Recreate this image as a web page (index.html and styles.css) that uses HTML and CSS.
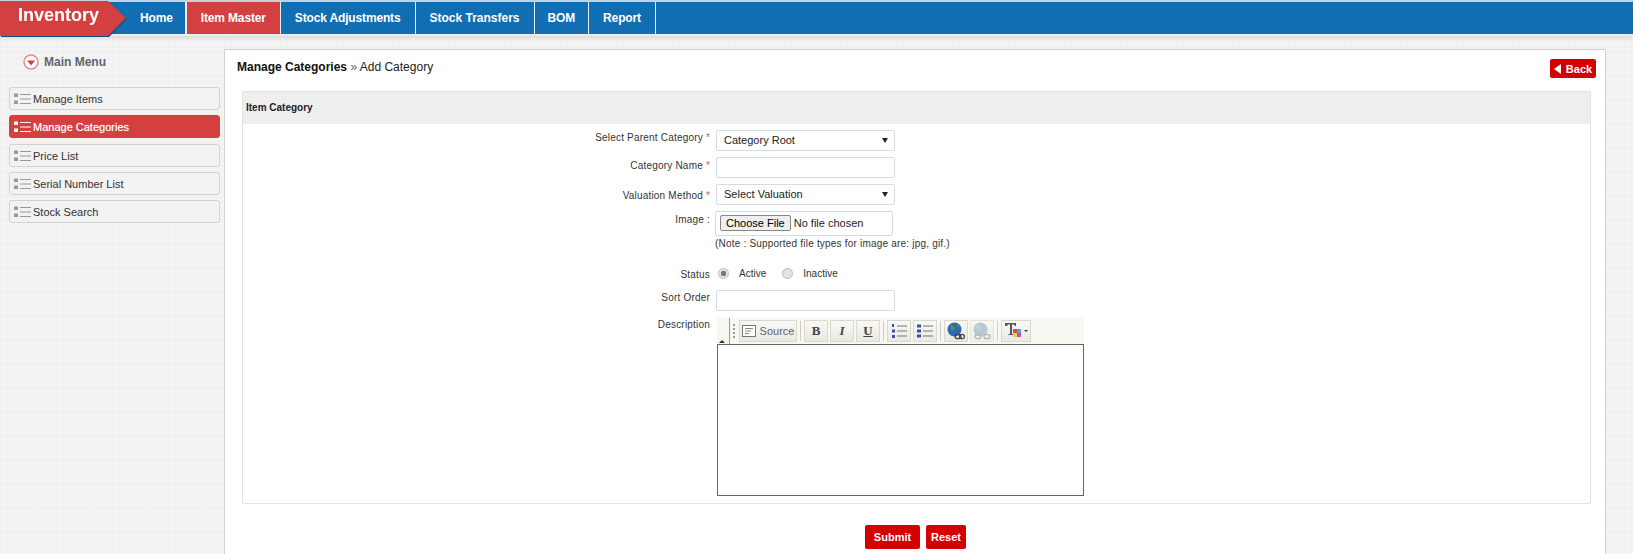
FILE: index.html
```html
<!DOCTYPE html>
<html lang="en">

<head>
    <meta charset="UTF-8">
    <meta name="viewport" content="width=device-width, initial-scale=1.0">
    <title>Add Category</title>
    <link rel="stylesheet" href="styles.css">
</head>

<body>
    <svg class="defs" width="0" height="0">
        <symbol id="list" viewBox="0 0 17 12">
            <rect class="dots" x="0" y="0.500" width="4" height="3.500" />
            <rect class="dots" x="0" y="7.500" width="4" height="3.500" />
            <rect x="6" y="1" width="11" height="1" />
            <rect x="6" y="5.500" width="11" height="1" />
            <rect x="6" y="10" width="11" height="1" />
        </symbol>
    </svg>

    <header class="topbar">
        <div class="logo-wrap">
            <div class="logo">Inventory</div>
        </div>
        <nav class="nav">
            <a class="nav-item">Home</a>
            <a class="nav-item active">Item Master</a>
            <a class="nav-item">Stock Adjustments</a>
            <a class="nav-item nav-transfers">Stock Transfers</a>
            <a class="nav-item nav-bom">BOM</a>
            <a class="nav-item">Report</a>
        </nav>
    </header>

    <div class="page">
        <aside class="sidebar">
            <div class="menu-title">
                <svg class="menu-icon" viewBox="0 0 16 16">
                    <circle cx="8" cy="8" r="7" fill="#fff" stroke="#e98a8a" stroke-width="1.500" />
                    <path d="M4 6.500h8L8 11.500z" fill="#d43f3f" />
                </svg>
                <span>Main Menu</span>
            </div>
            <a class="side-item"><svg class="list-icon"><use href="#list" /></svg>Manage Items</a>
            <a class="side-item active"><svg class="list-icon"><use href="#list" /></svg>Manage Categories</a>
            <a class="side-item"><svg class="list-icon"><use href="#list" /></svg>Price List</a>
            <a class="side-item"><svg class="list-icon"><use href="#list" /></svg>Serial Number List</a>
            <a class="side-item"><svg class="list-icon"><use href="#list" /></svg>Stock Search</a>
        </aside>

        <main class="panel">
            <div class="panel-head">
                <div class="crumbs"><b>Manage Categories</b> <span class="sep">»</span> Add Category</div>
                <a class="btn btn-back"><span class="back-arrow"></span>Back</a>
            </div>

            <section class="box">
                <h2 class="box-title">Item Category</h2>
                <form class="form">
                    <div class="row row-select">
                        <label class="label">Select Parent Category <i>*</i></label>
                        <div class="select-wrap">
                            <select class="field">
                                <option>Category Root</option>
                            </select>
                        </div>
                    </div>
                    <div class="row row-name">
                        <label class="label">Category Name <i>*</i></label>
                        <input class="field" type="text">
                    </div>
                    <div class="row row-valuation">
                        <label class="label">Valuation Method <i>*</i></label>
                        <div class="select-wrap">
                            <select class="field">
                                <option>Select Valuation</option>
                            </select>
                        </div>
                    </div>
                    <div class="row row-image">
                        <label class="label">Image :</label>
                        <div>
                            <input class="file" type="file">
                            <div class="note">(Note : Supported file types for image are: jpg, gif.)</div>
                        </div>
                    </div>
                    <div class="row row-status">
                        <label class="label">Status</label>
                        <div class="radios">
                            <label class="radio"><input type="radio" name="status" checked>Active</label>
                            <label class="radio"><input type="radio" name="status">Inactive</label>
                        </div>
                    </div>
                    <div class="row row-sort">
                        <label class="label">Sort Order</label>
                        <input class="field" type="text">
                    </div>
                    <div class="row row-desc">
                        <label class="label">Description</label>
                        <div class="editor">
                            <div class="toolbar">
                                <div class="collapse"><span></span></div>
                                <div class="grip"></div>
                                <a class="tool tool-source">
                                    <svg width="14" height="12" viewBox="0 0 14 12">
                                        <rect x="0.500" y="0.500" width="13" height="11" fill="#fff" stroke="#777" />
                                        <path d="M3 3.500h8M3 6h6M3 8.500h4" stroke="#888" />
                                    </svg>
                                    Source
                                </a>
                                <div class="tool-sep"></div>
                                <a class="tool fmt fmt-b">B</a>
                                <a class="tool fmt fmt-i">I</a>
                                <a class="tool fmt fmt-u">U</a>
                                <div class="tool-sep"></div>
                                <a class="tool">
                                    <svg width="16" height="16" viewBox="0 0 16 16">
                                        <path d="M1 1h2v3H1zM1 6.500h3v3H1zM1 12h3v3H1z" fill="#3a4fa8" />
                                        <path d="M6 3h10M6 8h10M6 13h10" stroke="#777" stroke-width="1.200" />
                                    </svg>
                                </a>
                                <a class="tool">
                                    <svg width="16" height="16" viewBox="0 0 16 16">
                                        <path d="M0 1.500h4v3H0zM0 6.500h4v3H0zM0 11.500h4v3H0z" fill="#3a4fa8" />
                                        <path d="M6 3h10M6 8h10M6 13h10" stroke="#777" stroke-width="1.200" />
                                    </svg>
                                </a>
                                <div class="tool-sep"></div>
                                <a class="tool">
                                    <svg width="18" height="18" viewBox="0 0 18 18">
                                        <circle cx="7.500" cy="7.500" r="7" fill="#2f68b5" />
                                        <path d="M3 3l4 1 1 3-3 2zM9 1l4 3-2 2z" fill="#4d9a45" />
                                        <ellipse cx="11" cy="14.500" rx="3" ry="2.200" fill="none" stroke="#444" stroke-width="1.300" />
                                        <ellipse cx="15" cy="14.500" rx="2.500" ry="2.200" fill="none" stroke="#444" stroke-width="1.300" />
                                    </svg>
                                </a>
                                <a class="tool tool-off">
                                    <svg width="18" height="18" viewBox="0 0 18 18">
                                        <circle cx="7.500" cy="7.500" r="7" fill="#8fa9c6" />
                                        <path d="M3 3l4 1 1 3-3 2z" fill="#a8c0a5" />
                                        <ellipse cx="5" cy="14.500" rx="3" ry="2.200" fill="none" stroke="#888" stroke-width="1.300" />
                                        <ellipse cx="14" cy="14.500" rx="3" ry="2.200" fill="none" stroke="#888" stroke-width="1.300" />
                                    </svg>
                                </a>
                                <div class="tool-sep"></div>
                                <a class="tool tool-color">
                                    <svg width="18" height="18" viewBox="0 0 18 18">
                                        <path d="M1 1h11v3h-1l-1-1.500H8V12h1.500v1h-5v-1H6V2.500H4L3 4H1z" fill="#555" />
                                        <rect x="9" y="7" width="4" height="4" fill="#e04848" />
                                        <rect x="13" y="7" width="4" height="4" fill="#4aa8d8" />
                                        <rect x="9" y="11" width="4" height="4" fill="#e8d040" />
                                        <rect x="13" y="11" width="4" height="4" fill="#d048b0" />
                                    </svg>
                                    <span class="caret"></span>
                                </a>
                            </div>
                            <div class="edit-area"></div>
                        </div>
                    </div>
                </form>
            </section>

            <div class="actions">
                <a class="btn btn-submit">Submit</a>
                <a class="btn btn-reset">Reset</a>
            </div>
        </main>
    </div>
</body>

</html>
```

FILE: styles.css
```css
* {
    box-sizing: border-box;
}

html,
body {
    height: 100%;
}

body {
    margin: 0;
    overflow: hidden;
    font-family: "Liberation Sans", Arial, sans-serif;
    font-size: 11px;
    color: #222;
    background-color: #f2f2f2;
    background-image:
        repeating-linear-gradient(0deg, rgba(255, 255, 255, 0.3) 0 1px, transparent 1px 6px),
        repeating-linear-gradient(90deg, rgba(0, 0, 0, 0.012) 0 1px, transparent 1px 7px);
}

.defs {
    position: absolute;
}

/* top bar */
.topbar {
    display: flex;
    height: 36px;
    background: #126eb2;
    border-top: 2px solid #c5d3de;
    border-bottom: 2px solid #e8eef2;
    box-shadow: 0 2px 4px rgba(0, 0, 0, 0.12);
}

.logo-wrap {
    margin: -1px 0 -2px;
    filter: drop-shadow(1px 1px 0 #0d4f82);
}

.logo {
    width: 126px;
    height: 100%;
    padding: 4px 0 0 18px;
    background: #d43f3f;
    color: #fff;
    font-size: 18px;
    font-weight: bold;
    clip-path: polygon(0 0, 108px 0, 100% 17px, 108px 100%, 0 100%);
}

.nav {
    display: flex;
}

.nav-item {
    display: flex;
    align-items: center;
    padding: 0 14px;
    border-right: 1px solid #e8eef2;
    color: #fff;
    font-size: 12px;
    font-weight: bold;
    letter-spacing: -0.15px;
}

.nav-item:first-child {
    padding-right: 12px;
}

.nav-item:nth-child(2) {
    border-left: 1px solid #e8eef2;
}

.nav-item.active {
    background: #d43f3f;
}

.nav-transfers {
    letter-spacing: 0;
    padding-right: 14px;
}

.nav-bom {
    padding: 0 13px;
}

/* layout */
.page {
    display: flex;
    height: 518px;
}

.sidebar {
    width: 224px;
    padding: 14px 4px 0 9px;
}

.menu-title {
    display: flex;
    align-items: center;
    gap: 5px;
    height: 24px;
    margin-bottom: 13px;
    padding-left: 14px;
    color: #5f6570;
    font-size: 12px;
    font-weight: bold;
}

.menu-icon {
    width: 16px;
    height: 16px;
}

.side-item {
    display: flex;
    align-items: center;
    gap: 2px;
    height: 23px;
    margin-bottom: 5px;
    padding-left: 4px;
    background: #f2f2f2;
    border: 1px solid #d2d2d2;
    border-radius: 3px;
    color: #333;
    font-size: 11px;
}

.side-item.active {
    margin-bottom: 6px;
    background: #d43f3f;
    border-color: #d43f3f;
    color: #fff;
    text-shadow: 0 0 1px rgba(255, 255, 255, 0.6);
}

.list-icon {
    width: 17px;
    height: 12px;
    fill: #999;
}

.list-icon .dots {
    fill: #777;
}

.side-item.active .list-icon {
    fill: #fff;
}

.panel {
    width: 1382px;
    padding: 0 14px 0 17px;
    margin-top: 13px;
    background: #fff;
    border: 1px solid #d0d0d0;
    border-bottom: 0;
}

.panel-head {
    display: flex;
    justify-content: space-between;
    height: 41px;
    padding-top: 9px;
    margin: 0 -5px;
}

.crumbs {
    padding-top: 1px;
    color: #222;
    font-size: 12px;
}

.crumbs b {
    color: #111;
}

.sep {
    color: #666;
}

.btn {
    display: flex;
    align-items: center;
    justify-content: center;
    background: #d50000;
    border-radius: 2px;
    color: #fff;
    font-size: 11px;
    font-weight: bold;
}

.btn-back {
    width: 46px;
    height: 19px;
    gap: 5px;
}

.back-arrow {
    width: 0;
    height: 0;
    border-top: 5px solid transparent;
    border-bottom: 5px solid transparent;
    border-right: 7px solid #fff;
}

/* form box */
.box {
    height: 413px;
    background: #fff;
    border: 1px solid #e2e2e2;
    border-radius: 2px;
}

.box-title {
    height: 32px;
    margin: 0;
    padding: 10px 3px 0;
    background: #eee;
    color: #222;
    font-size: 10px;
    font-weight: bold;
}

.row {
    display: grid;
    grid-template-columns: 467px 1fr;
    column-gap: 6px;
    align-items: start;
}

.form {
    padding-top: 6px;
}

.label {
    padding-top: 2px;
    color: #333;
    font-size: 10px;
    letter-spacing: 0.2px;
    text-align: right;
}

.label i {
    color: #e05c5c;
    font-style: normal;
}

.row-name .label,
.row-image .label {
    padding-top: 3px;
}

.row-valuation .label {
    padding-top: 6px;
}

.row-desc .label {
    padding-top: 1px;
}

.field {
    display: block;
    width: 179px;
    height: 21px;
    padding: 0 7px 1px;
    background: #fff;
    border: 1px solid #d5dbe6;
    border-radius: 2px;
    color: #222;
    font-family: inherit;
    font-size: 11px;
    outline: 0;
}

select.field {
    appearance: none;
}

.select-wrap {
    position: relative;
    width: 179px;
}

.select-wrap::after {
    content: "";
    position: absolute;
    top: 8px;
    right: 7px;
    border-top: 5px solid #222;
    border-left: 3px solid transparent;
    border-right: 3px solid transparent;
}

.row-select,
.row-name,
.row-valuation {
    height: 27px;
}

.row-image {
    height: 56px;
}

.row-status {
    height: 23px;
}

.row-sort {
    height: 28px;
}

.file {
    display: block;
    width: 178px;
    height: 25px;
    margin-left: -1px;
    padding: 3px 4px;
    border: 1px solid #d5dbe6;
    border-radius: 2px;
    color: #222;
    font-family: inherit;
    font-size: 11px;
}

.file::file-selector-button {
    height: 16px;
    margin-right: 3px;
    padding: 0 5px;
    background: #efefef;
    border: 1px solid #888;
    border-radius: 2px;
    font-family: inherit;
    font-size: 11px;
}

.note {
    margin: 2px 0 0 -1px;
    color: #333;
    font-size: 10px;
    letter-spacing: 0.2px;
    white-space: nowrap;
}

.radios {
    display: flex;
    gap: 16px;
    padding: 1px 0 0 2px;
}

.radio {
    display: flex;
    align-items: center;
    gap: 6px;
    color: #333;
    font-size: 10px;
}

.radio input {
    appearance: none;
    width: 11px;
    height: 11px;
    margin: 0 4px 0 0;
    background: #e4e4e4;
    border: 1px solid #bbb;
    border-radius: 50%;
}

.radio input:checked {
    background: radial-gradient(circle, #777 0 2.500px, #e4e4e4 3px);
}

/* rich text editor */
.editor {
    width: 367px;
    margin-left: 1px;
}

.toolbar {
    display: flex;
    align-items: center;
    height: 26px;
    background: #f8f7f2;
}

.collapse {
    position: relative;
    width: 13px;
    height: 100%;
    border-right: 1px solid #999;
}

.collapse span {
    position: absolute;
    left: 2px;
    bottom: 1px;
    border-bottom: 3px solid #333;
    border-left: 3px solid transparent;
    border-right: 3px solid transparent;
}

.grip {
    width: 2px;
    height: 14px;
    margin: 0 4px 0 3px;
    border-left: 2px dotted #999;
}

.tool {
    display: flex;
    align-items: center;
    justify-content: center;
    gap: 4px;
    width: 24px;
    height: 22px;
    margin-right: 2px;
    background: linear-gradient(#f8f8f6, #e8e8e4);
    border: 1px solid #ddd9c8;
    color: #666;
}

.tool:has(+ .tool-sep) {
    margin-right: 0;
}

.tool-source {
    width: 58px;
    font-size: 11px;
}

.tool-off {
    opacity: 0.6;
}

.tool-color {
    width: 30px;
    gap: 2px;
}

.caret {
    border-top: 2px solid #333;
    border-left: 2px solid transparent;
    border-right: 2px solid transparent;
}

.tool-sep {
    width: 1px;
    height: 20px;
    margin: 0 3px;
    background: #ccc;
}

.fmt {
    color: #444;
    font-family: "Liberation Serif", serif;
    font-size: 13px;
    font-weight: bold;
}

.fmt-i {
    font-style: italic;
}

.fmt-u {
    text-decoration: underline;
}

.edit-area {
    height: 152px;
    background: #fff;
    border: 1px solid #666;
}

.actions {
    display: flex;
    justify-content: center;
    gap: 6px;
    margin-top: 21px;
    padding-right: 2px;
}

.actions .btn {
    height: 24px;
}

.btn-submit {
    width: 55px;
}

.btn-reset {
    width: 40px;
}
```
